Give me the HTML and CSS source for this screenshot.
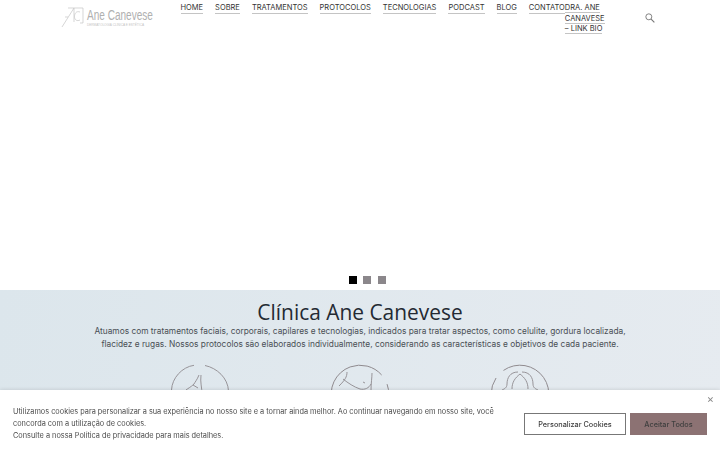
FILE: index.html
```html
<!DOCTYPE html>
<html lang="pt-BR">

<head>
  <meta charset="UTF-8" />
  <meta name="viewport" content="width=device-width, initial-scale=1.0" />
  <title>Ane Canevese</title>
  <link rel="stylesheet" href="styles.css">
</head>

<body>
  <header class="site-header">
    <a class="logo" href="#">
      <svg width="94" height="28" viewBox="0 0 94 28">
        <g fill="none" stroke="#c4c4c4" stroke-width="0.7">
          <path d="M7 5H22V20H19" />
          <path d="M1 24L13 5V19" />
          <path d="M19 9C15 7.500 13.500 11 13.500 13.500C13.500 17 16 18.500 19 17" />
          <path d="M7 14H4" />
        </g>
        <text class="logo-name" transform="translate(26 17) scale(0.67 1)">Ane Canevese</text>
        <text class="logo-sub" transform="translate(26 22.500) scale(0.9 1)">DERMATOLOGIA CLÍNICA E ESTÉTICA</text>
      </svg>
    </a>

    <nav class="main-nav">
      <a href="#">HOME</a>
      <a href="#">SOBRE</a>
      <a href="#">TRATAMENTOS</a>
      <a href="#">PROTOCOLOS</a>
      <a href="#">TECNOLOGIAS</a>
      <a href="#">PODCAST</a>
      <a href="#">BLOG</a>
      <div class="nav-last">
        <a href="#">CONTATO</a>
        <div class="nav-bio"><a href="#">DRA. ANE CANAVESE</a> <a href="#">– LINK BIO</a></div>
      </div>
    </nav>

    <button class="search-btn" aria-label="Buscar">
      <svg width="10" height="10" viewBox="0 0 11 11" fill="none" stroke="#777" stroke-width="1">
        <circle cx="4.200" cy="4.200" r="3.300" />
        <path d="M6.700 6.700L10.300 10.300" stroke-width="1.300" />
      </svg>
    </button>
  </header>

  <section class="hero">
    <div class="dots">
      <span class="dot active"></span>
      <span class="dot"></span>
      <span class="dot"></span>
    </div>
  </section>

  <section class="intro">
    <h1>Clínica Ane Canevese</h1>
    <p>Atuamos com tratamentos faciais, corporais, capilares e tecnologias, indicados para tratar aspectos, como celulite, gordura localizada, flacidez e rugas. Nossos protocolos são elaborados individualmente, considerando as características e objetivos de cada paciente.</p>

    <div class="icon-row">
      <svg width="60" height="60" viewBox="0 0 60 60" fill="none" stroke="#8f8a8e" stroke-width="0.9">
        <path d="M24 1.300C12 3 2 14 1.500 26" />
        <path d="M35 1.500C47 4 58 14 58.500 27" />
        <path d="M29 11C27 16 25 18 24 20C21 23 17 25 16 26" />
        <path d="M23 21L28 24" />
        <path d="M31 11C30 18 32 24 32 30" />
      </svg>
      <svg width="60" height="60" viewBox="0 0 60 60" fill="none" stroke="#8f8a8e" stroke-width="0.9">
        <circle cx="30" cy="30" r="28.800" stroke-dasharray="170 11" transform="rotate(-20 30 30)" />
        <path d="M17 8C17 13 15 16 9 22" />
        <path d="M42 9C42 14 41 19 41 26" />
        <path d="M13 15C18 19 24 23 30 25C35 26 39 24 41 20" />
        <path d="M33 18L35 19" />
      </svg>
      <svg width="60" height="60" viewBox="0 0 60 60" fill="none" stroke="#8f8a8e" stroke-width="0.9">
        <circle cx="30" cy="30" r="28.800" stroke-dasharray="170 11" transform="rotate(235 30 30)" />
        <path d="M28 8C20 8 17 14 17 20C17 24 14 25 12 26" />
        <path d="M30 10C25 14 22 18 22 25" />
        <path d="M30 10C35 14 38 18 38 25" />
        <path d="M32 8C40 8 43 14 43 20C43 24 46 25 48 26" />
      </svg>
    </div>
  </section>

  <div class="cookie-bar">
    <div class="cookie-text">
      Utilizamos cookies para personalizar a sua experiência no nosso site e a tornar ainda melhor. Ao continuar navegando em nosso site, você concorda com a utilização de cookies.<br>
      Consulte a nossa <a href="#">Política de privacidade</a> para mais detalhes.
    </div>
    <div class="cookie-actions">
      <button class="btn-outline">Personalizar Cookies</button>
      <button class="btn-accept">Aceitar Todos</button>
    </div>
    <button class="cookie-close" aria-label="Fechar">×</button>
  </div>
</body>

</html>
```

FILE: styles.css
```css
* {
  box-sizing: border-box;
}

html,
body {
  height: 450px;
  overflow: hidden;
}

body {
  margin: 0;
  font-family: Inter, "Open Sans", sans-serif;
  background: #fff;
  color: #333;
}

a {
  color: inherit;
  text-decoration: none;
}

button {
  font-family: inherit;
  cursor: pointer;
}

.site-header {
  display: flex;
  align-items: flex-start;
  height: 40px;
  padding-left: 61px;
}

.logo {
  display: block;
  width: 119.500px;
  padding-top: 3px;
}

.logo-name {
  font-family: "Liberation Sans", sans-serif;
  font-size: 15px;
  fill: #b0b0b0;
}

.logo-sub {
  font-family: "Liberation Sans", sans-serif;
  font-size: 3.500px;
  fill: #c4c4c4;
}

.main-nav {
  display: flex;
  align-items: flex-start;
  gap: 12px;
  width: 424px;
  padding-top: 3px;
  font-size: 7.500px;
  font-weight: 400;
  line-height: 10px;
  color: #333;
  white-space: nowrap;
}

.main-nav a {
  border-bottom: 1px solid #c4c4c4;
}

.nav-last {
  display: flex;
  align-items: flex-start;
}

.nav-bio {
  width: 42px;
  line-height: 10.500px;
  white-space: normal;
}

.search-btn {
  margin: 10px 0 0 40px;
  padding: 0;
  border: none;
  background: none;
}

.hero {
  display: flex;
  align-items: flex-end;
  justify-content: center;
  height: 250px;
  padding-bottom: 6px;
}

.dots {
  display: flex;
  gap: 6.500px;
  padding-left: 14px;
}

.dot {
  width: 8px;
  height: 8px;
  background: #8b878b;
}

.dot.active {
  background: #000;
}

.intro {
  height: 160px;
  padding-top: 8px;
  background: linear-gradient(100deg, #dce6ec, #e6ebf0);
  text-align: center;
}

.intro h1 {
  margin: 0;
  font-family: "Open Sans", sans-serif;
  font-size: 22px;
  font-weight: 400;
  line-height: 26px;
  color: #242a33;
  transform: scaleX(0.95);
}

.intro p {
  width: 540px;
  margin: 1px auto 0;
  font-size: 8.350px;
  line-height: 12.500px;
  color: #4a4f55;
}

.icon-row {
  display: flex;
  justify-content: center;
  gap: 100px;
  margin-top: 14px;
}

.cookie-bar {
  position: fixed;
  left: 0;
  right: 0;
  bottom: 0;
  display: flex;
  align-items: center;
  justify-content: space-between;
  height: 60px;
  padding: 8px 13px 0;
  background: #fff;
  box-shadow: 0 0 4px rgba(0, 0, 0, 0.15);
}

.cookie-text {
  width: 490px;
  font-size: 7.350px;
  line-height: 12px;
  color: #4a4a4a;
}

.cookie-actions {
  display: flex;
  gap: 4px;
}

.btn-outline,
.btn-accept {
  height: 22px;
  padding: 0;
  font-size: 7.300px;
  font-weight: 500;
  color: #3f3f3f;
}

.btn-outline {
  width: 102px;
  border: 1px solid #777;
  background: #fff;
}

.btn-accept {
  width: 77px;
  border: none;
  background: #8c7273;
}

.cookie-close {
  position: absolute;
  top: 4px;
  right: 6px;
  padding: 0;
  border: none;
  background: none;
  font-size: 11px;
  line-height: 11px;
  color: #888;
}
```
